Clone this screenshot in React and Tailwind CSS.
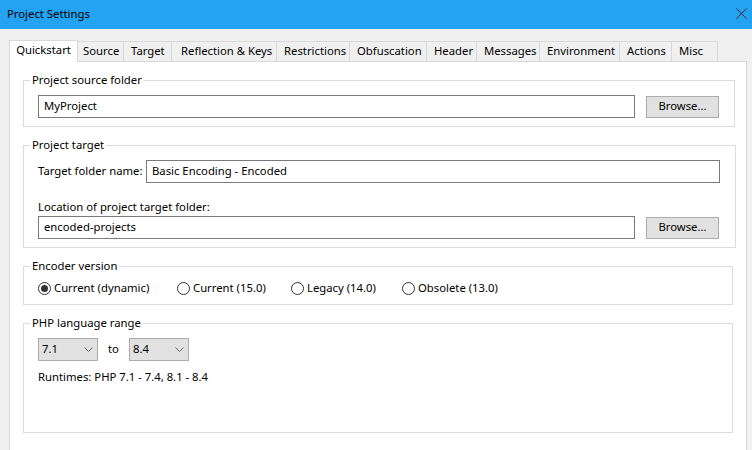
import React from 'react';

const tabs = [
    ['Source', 'w-[46px] pl-[5px]'],
    ['Target', 'w-[48px] pl-[7px]'],
    ['Reflection & Keys', 'w-[105px] pl-[9px]'],
    ['Restrictions', 'w-[73px] pl-[7px]'],
    ['Obfuscation', 'w-[77px] pl-[7px]'],
    ['Header', 'w-[50px] pl-[7px]'],
    ['Messages', 'w-[63px] pl-[7px]'],
    ['Environment', 'w-[80px] pl-[7px]'],
    ['Actions', 'w-[52px] pl-[7px]'],
    ['Misc', 'w-[46px] pl-[7px]'],
];

const Group = ({ title, className, children }) => (
    <fieldset className={`mx-[13px] border border-[#dcdcdc] pl-[14px] pr-[15px] ${className}`}>
        <legend className="ml-[-8px] px-[2px] leading-[16px]">{title}</legend>
        {children}
    </fieldset>
);

const TextBox = ({ value, className }) => (
    <div className={`flex h-[23px] items-center border border-[#7a7a7a] bg-white pl-[5px] ${className}`}>{value}</div>
);

const BrowseButton = () => (
    <button className="h-[22px] w-[73px] border border-[#adadad] bg-[#e1e1e1] text-center">Browse...</button>
);

const Radio = ({ label, checked, className }) => (
    <label className={`flex items-center gap-[3px] ${className}`}>
        <span className="flex h-[13px] w-[13px] items-center justify-center rounded-full border border-[#333333] bg-white">
            {checked && <span className="h-[7px] w-[7px] rounded-full bg-[#333333]" />}
        </span>
        {label}
    </label>
);

const Dropdown = ({ value }) => (
    <div className="flex h-[23px] w-[60px] items-center justify-between border border-[#adadad] bg-[#e1e1e1] pl-[3px] pr-[4px]">
        {value}
        <svg width="9" height="5" viewBox="0 0 9 5" fill="none" stroke="#666666" strokeWidth="1">
            <path d="M.5.5l4 4 4-4" />
        </svg>
    </div>
);

export default function App() {
    return (
        <div className="h-[450px] w-[752px] overflow-hidden bg-[#f0f0f0] font-['Noto_Sans',sans-serif] text-[11.3px] text-black">
            {/* Title bar */}
            <div className="flex h-[29px] items-center justify-between bg-[#23a3f2] pl-[7px] pr-[5px]">
                <span>Project Settings</span>
                <svg width="11" height="11" viewBox="0 0 11 11" stroke="#222222" strokeWidth="1" className="mb-[3px]">
                    <path d="M.5.5l10 10M10.5.5l-10 10" />
                </svg>
            </div>

            {/* Tabs */}
            <div className="ml-[9px] mr-[5px] mt-[10px]">
                <div className="flex h-[22px] items-end">
                    <div className="z-10 -mb-px flex h-[22px] w-[69px] items-start justify-center border border-b-0 border-[#d9d9d9] bg-white pt-[1px]">
                        Quickstart
                    </div>
                    {tabs.map(([name, width]) => (
                        <div
                            key={name}
                            className={`flex h-[20px] items-center border border-b-0 border-l-0 border-[#d9d9d9] bg-[#f0f0f0] ${width}`}
                        >
                            {name}
                        </div>
                    ))}
                </div>

                {/* Tab page */}
                <div className="h-[400px] border border-[#d9d9d9] bg-white pt-[10px]">
                    <Group title="Project source folder" className="h-[55px]">
                        <div className="mt-[7px] flex items-center gap-[11px]">
                            <TextBox value="MyProject" className="w-[597px]" />
                            <BrowseButton />
                        </div>
                    </Group>

                    <Group title="Project target" className="mt-[10px] h-[111px]">
                        <div className="mt-[7px] flex items-center gap-[5px]">
                            <span className="w-[103px] whitespace-nowrap">Target folder name:</span>
                            <TextBox value="Basic Encoding - Encoded" className="w-[574px]" />
                        </div>
                        <div className="mt-[16px] leading-[16px]">Location of project target folder:</div>
                        <div className="mt-[1px] flex items-center gap-[11px]">
                            <TextBox value="encoded-projects" className="w-[597px]" />
                            <BrowseButton />
                        </div>
                    </Group>

                    <Group title="Encoder version" className="mt-[10px] h-[47px]">
                        <div className="mt-[6px] flex h-[16px] items-center">
                            <Radio label="Current (dynamic)" checked className="w-[139px]" />
                            <Radio label="Current (15.0)" className="w-[114px]" />
                            <Radio label="Legacy (14.0)" className="w-[111px]" />
                            <Radio label="Obsolete (13.0)" />
                        </div>
                    </Group>

                    <Group title="PHP language range" className="mt-[10px] h-[118px]">
                        <div className="mt-[7px] flex items-center">
                            <Dropdown value="7.1" />
                            <span className="w-[31px] text-center">to</span>
                            <Dropdown value="8.4" />
                        </div>
                        <div className="mt-[8px] leading-[16px]">Runtimes: PHP 7.1 - 7.4, 8.1 - 8.4</div>
                    </Group>
                </div>
            </div>
        </div>
    );
}
